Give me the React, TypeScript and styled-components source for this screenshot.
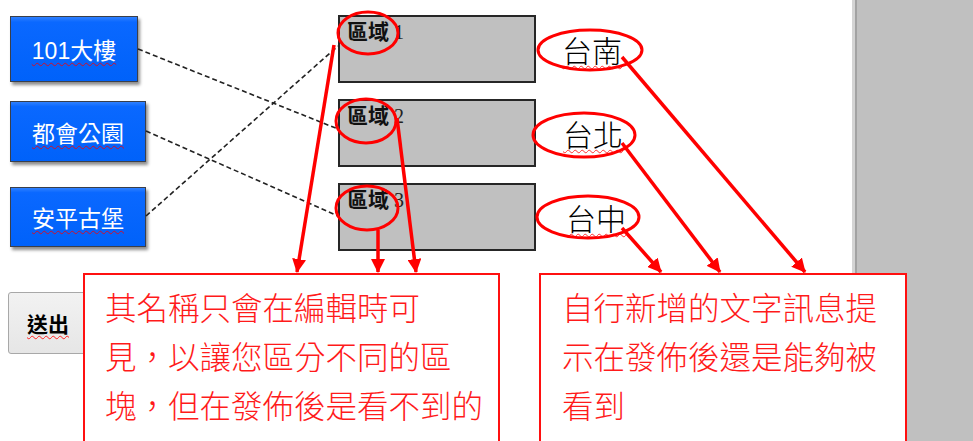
import React from 'react';
import styled, { createGlobalStyle } from 'styled-components';

const GlobalStyle = createGlobalStyle`
  html, body {
    margin: 0;
    padding: 0;
    background: #fff;
  }
  body {
    font-family: "Liberation Sans", "Noto Sans CJK TC", sans-serif;
    overflow: hidden;
  }
`;

const Page = styled.div`
  position: relative;
  display: flex;
  width: 973px;
  height: 441px;
  overflow: hidden;
`;

const Stage = styled.main`
  width: 852px;
  flex: none;
  display: flex;
  flex-direction: column;
  background: #fff;
`;

const SidePanel = styled.aside`
  flex: 1;
  background: #c0c0c0;
  border-left: 3px solid #d4d4d4;
  box-shadow: inset 2px 0 0 #a2a2a2;
`;

const Board = styled.section`
  display: grid;
  grid-template-columns: 338px auto;
  height: 251px;
`;

const ChoiceColumn = styled.div`
  display: flex;
  flex-direction: column;
  align-items: flex-start;
  padding: 16px 0 0 10px;
`;

const ChoiceButton = styled.button<{ $w: number; $h: number; $mt: number }>`
  width: ${(p) => p.$w}px;
  height: ${(p) => p.$h}px;
  margin-top: ${(p) => p.$mt}px;
  padding: 0;
  border: 1px solid #3a3f4a;
  background: linear-gradient(#2f80ff 0, #0a68ff 8%, #0062fa 100%);
  box-shadow: 2px 3px 3px rgba(0, 0, 0, 0.45);
  color: #fff;
  font-family: "Liberation Sans", "Noto Sans CJK TC", sans-serif;
  font-size: 23px;
  cursor: pointer;
`;

const Squiggle = styled.span<{ $color?: string }>`
  text-decoration: underline wavy ${(p) => p.$color || '#d0102a'};
  text-decoration-thickness: 1px;
  text-underline-offset: 3px;
`;

const ZoneColumn = styled.div`
  display: flex;
  flex-direction: column;
  gap: 16px;
  padding-top: 15px;
`;

const ZoneRow = styled.div<{ $shift: number }>`
  display: flex;
  align-items: center;
  gap: ${(p) => 26 + p.$shift}px;
`;

const ZoneBox = styled.div`
  box-sizing: border-box;
  width: 198px;
  height: 68px;
  background: #c0c0c0;
  border: 2px solid #262626;
  padding: 3px 7px;
  line-height: 1;
`;

const ZoneName = styled.span`
  font-family: "Noto Sans CJK TC", sans-serif;
  font-weight: 700;
  font-size: 21px;
  color: #111;
`;

const ZoneNumber = styled.span`
  font-family: "Liberation Serif", serif;
  font-size: 20px;
  color: #222;
  margin-left: 5px;
`;

const CityLabel = styled.div`
  font-family: "Noto Sans CJK TC", sans-serif;
  font-weight: 300;
  font-size: 30px;
  line-height: 1;
  color: #000;
`;

const SubmitButton = styled.button`
  box-sizing: border-box;
  width: 84px;
  height: 62px;
  margin: 41px 0 0 8px;
  border: 1px solid #a8a8a8;
  border-radius: 3px;
  background: linear-gradient(#f2f2f2, #e6e6e6);
  font-family: "Noto Sans CJK TC", sans-serif;
  font-weight: 700;
  font-size: 21px;
  color: #000;
  text-align: left;
  padding: 0 0 0 18px;
`;

const Callout = styled.div<{ $left: number; $width: number; $pad: number }>`
  position: absolute;
  top: 273px;
  left: ${(p) => p.$left}px;
  width: ${(p) => p.$width}px;
  height: 200px;
  box-sizing: border-box;
  background: #fff;
  border: 2px solid #ff1010;
  padding: 7px 0 0 ${(p) => p.$pad}px;
  font-family: "Noto Sans CJK TC", sans-serif;
  font-weight: 300;
  font-size: 31.5px;
  line-height: 49px;
  color: #ff1a1a;
  z-index: 1;
`;

const Overlay = styled.svg`
  position: absolute;
  left: 0;
  top: 0;
  width: 973px;
  height: 441px;
  pointer-events: none;
  z-index: 2;
`;

const choices = [
  { label: '101大樓', w: 128, h: 66, mt: 0 },
  { label: '都會公園', w: 136, h: 61, mt: 19 },
  { label: '安平古堡', w: 136, h: 60, mt: 25 },
];

const zones = [
  { n: 1, city: '台南', shift: 0 },
  { n: 2, city: '台北', shift: 1 },
  { n: 3, city: '台中', shift: 4 },
];

// dashed links: button edge -> zone edge
const links = [
  [138, 49, 338, 129],
  [146, 131, 338, 216],
  [146, 216, 338, 46],
];

const rings = [
  [368, 33, 30, 21],
  [366, 121, 30, 22],
  [367, 208, 31, 22],
  [590, 50, 52, 20],
  [584, 135, 51, 22],
  [588, 217, 51, 21],
];

const arrows = [
  [334, 45, 297, 272],
  [378, 230, 378, 272],
  [397, 118, 416, 272],
  [622, 57, 805, 272],
  [622, 143, 720, 272],
  [622, 228, 661, 272],
];

const Annotations = () => (
  <Overlay viewBox="0 0 973 441">
    <defs>
      <marker
        id="tip"
        viewBox="0 0 14 14"
        markerWidth="14"
        markerHeight="14"
        refX="13"
        refY="7"
        orient="auto"
        markerUnits="userSpaceOnUse"
      >
        <path d="M0,0 L14,7 L0,14 z" fill="#ff0000" />
      </marker>
    </defs>
    {links.map(([x1, y1, x2, y2], i) => (
      <line
        key={`l${i}`}
        x1={x1}
        y1={y1}
        x2={x2}
        y2={y2}
        stroke="#222"
        strokeWidth={1.6}
        strokeDasharray="5 3"
      />
    ))}
    {rings.map(([cx, cy, rx, ry], i) => (
      <ellipse key={`e${i}`} cx={cx} cy={cy} rx={rx} ry={ry} fill="none" stroke="#ff0000" strokeWidth={3} />
    ))}
    {arrows.map(([x1, y1, x2, y2], i) => (
      <line
        key={`a${i}`}
        x1={x1}
        y1={y1}
        x2={x2}
        y2={y2}
        stroke="#ff0000"
        strokeWidth={3.5}
        markerEnd="url(#tip)"
      />
    ))}
  </Overlay>
);

const App = () => (
  <>
    <GlobalStyle />
    <Page>
      <Stage>
        <Board>
          <ChoiceColumn>
            {choices.map((c) => (
              <ChoiceButton key={c.label} $w={c.w} $h={c.h} $mt={c.mt}>
                <Squiggle>{c.label}</Squiggle>
              </ChoiceButton>
            ))}
          </ChoiceColumn>
          <ZoneColumn>
            {zones.map((z) => (
              <ZoneRow key={z.n} $shift={z.shift}>
                <ZoneBox>
                  <ZoneName>區域</ZoneName>
                  <ZoneNumber>{z.n}</ZoneNumber>
                </ZoneBox>
                <CityLabel>
                  <Squiggle $color="#ff3030">{z.city}</Squiggle>
                </CityLabel>
              </ZoneRow>
            ))}
          </ZoneColumn>
        </Board>
        <SubmitButton>
          <Squiggle $color="#ff2020">送出</Squiggle>
        </SubmitButton>
      </Stage>
      <SidePanel />
      <Callout $left={83} $width={417} $pad={20}>
        其名稱只會在編輯時可
        <br />
        見，以讓您區分不同的區
        <br />
        塊，但在發佈後是看不到的
      </Callout>
      <Callout $left={539} $width={368} $pad={21}>
        自行新增的文字訊息提
        <br />
        示在發佈後還是能夠被
        <br />
        看到
      </Callout>
      <Annotations />
    </Page>
  </>
);

export default App;
